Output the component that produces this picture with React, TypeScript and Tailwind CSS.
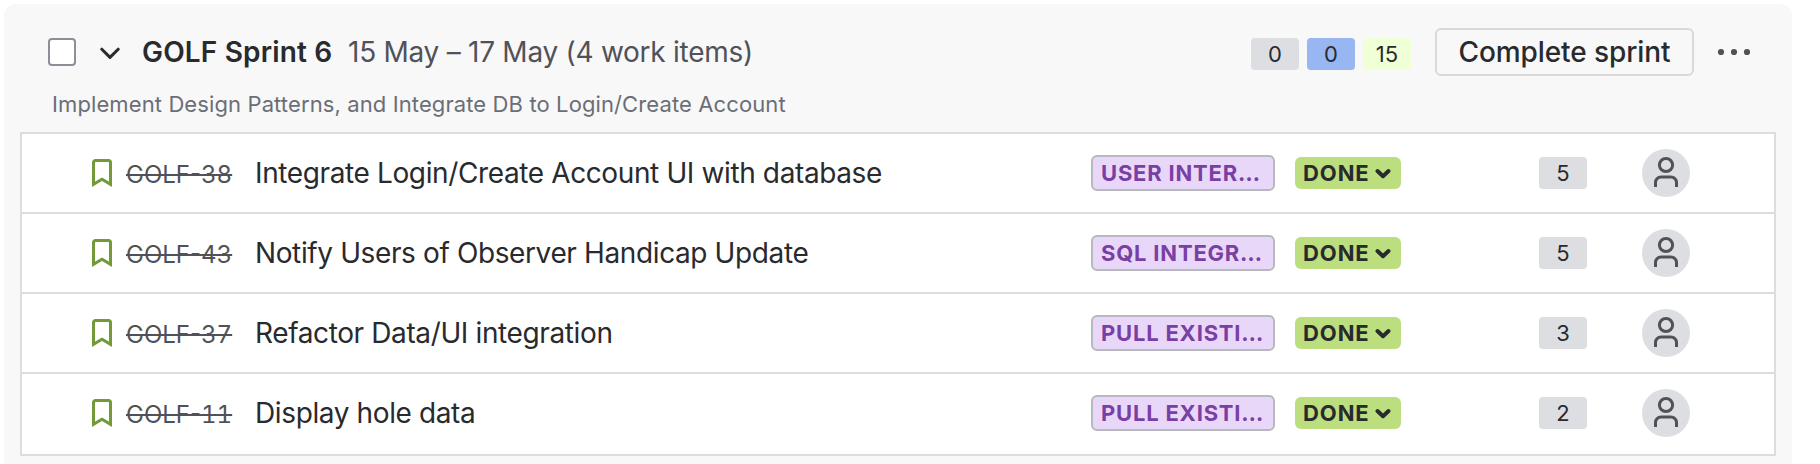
type WorkItem = { key: string; num: number; title: string; epic: string; points: number };

const items: WorkItem[] = [
  { key: "GOLF", num: 38, title: "Integrate Login/Create Account UI with database", epic: "USER INTER…", points: 5 },
  { key: "GOLF", num: 43, title: "Notify Users of Observer Handicap Update", epic: "SQL INTEGR…", points: 5 },
  { key: "GOLF", num: 37, title: "Refactor Data/UI integration", epic: "PULL EXISTI…", points: 3 },
  { key: "GOLF", num: 11, title: "Display hole data", epic: "PULL EXISTI…", points: 2 },
];

function StoryIcon() {
  return (
    <svg width="20" height="28" viewBox="0 0 20 28" fill="none" className="shrink-0">
      <path d="M1.5 25.3V3.5a2 2 0 0 1 2-2h13a2 2 0 0 1 2 2v21.8L10 20.2z" stroke="#73993a" strokeWidth="3" />
    </svg>
  );
}

function Avatar() {
  return (
    <span className="ml-[55px] size-12 shrink-0 rounded-full bg-[#dddee1]">
      <svg width="48" height="48" viewBox="0 0 48 48" fill="none" stroke="#505258" strokeWidth="3">
        <circle cx="24" cy="16" r="6.6" />
        <path d="M13.500 38v-4.500a5.500 5.500 0 0 1 5.500-5.500h10a5.500 5.500 0 0 1 5.500 5.500V38" />
      </svg>
    </span>
  );
}

function Row({ item }: { item: WorkItem }) {
  return (
    <li className="flex h-20 items-center border-b-2 border-[#dddddf] pl-[70px] last:border-transparent">
      <StoryIcon />
      <span className="mt-[3px] ml-[14px] w-[129px] shrink-0 text-2xl leading-7 text-[#505258]">
        <s className="decoration-2">
          {item.key}-<span className="tabular-nums">{item.num}</span>
        </s>
      </span>
      <span className="min-w-0 flex-1 truncate text-[28px] leading-9 tracking-[-0.38px] text-[#292a2e]">{item.title}</span>
      <span className="flex h-9 w-[184px] shrink-0 items-center rounded-md border-2 border-[#b7b9be] bg-[#e9d7f9] pl-2 text-[22px] leading-none font-bold tracking-[0.8px] whitespace-nowrap text-[#7a3fa3]">
        {item.epic}
      </span>
      <button className="ml-5 flex h-8 w-[106px] shrink-0 items-center rounded-md bg-[#bbde7e] pl-2 text-[22px] leading-none font-bold tracking-[0.9px] text-[#292a2e]">
        DONE
        <svg width="16" height="12" viewBox="0 0 16 12" fill="none" className="mt-px ml-[5px]">
          <path d="M2.500 3l5.500 5.200L13.500 3" stroke="#292a2e" strokeWidth="4" strokeLinecap="round" strokeLinejoin="round" />
        </svg>
      </button>
      <span className="ml-[138px] flex h-8 w-12 shrink-0 items-center justify-center rounded bg-[#dddee1] text-[22px] leading-none text-[#292a2e]">
        {item.points}
      </span>
      <Avatar />
      <span className="w-[84px] shrink-0" />
    </li>
  );
}

export default function App() {
  return (
    <div className="h-[464px] overflow-hidden bg-white pt-1 pl-1 font-['Inter',sans-serif]">
      <section className="h-[460px] w-[1788px] rounded-t-xl bg-[#f8f8f8] px-4">
        <header className="flex h-24 items-center pl-7">
          <span className="size-7 shrink-0 rounded border-2 border-[#8c8f97] bg-white" />
          <svg width="20" height="14" viewBox="0 0 20 14" fill="none" className="mt-1 ml-6">
            <path d="M1.800 2.200L10 10.400l8.200-8.200" stroke="#292a2e" strokeWidth="3" strokeLinecap="round" strokeLinejoin="round" />
          </svg>
          <h2 className="ml-[22px] w-[206px] text-[28px] leading-9 font-semibold tracking-[0.16px] text-[#292a2e]">GOLF Sprint 6</h2>
          <span className="text-[28px] leading-9 tracking-[-0.26px] text-[#505258]">15 May – 17 May (4 work items)</span>
          <div className="mt-1 ml-auto flex gap-2 text-[22px] leading-none text-[#292a2e]">
            <span className="flex h-8 w-12 items-center justify-center rounded bg-[#dddee1]">0</span>
            <span className="flex h-8 w-12 items-center justify-center rounded bg-[#97b6f2]">0</span>
            <span className="flex h-8 w-12 items-center justify-center rounded bg-[#efffd6]">15</span>
          </div>
          <button className="ml-6 h-12 w-[259px] rounded-md border-2 border-[#d9d9db] text-[28px] leading-9 font-medium tracking-[-0.1px] text-[#292a2e]">
            Complete sprint
          </button>
          <svg width="34" height="8" viewBox="0 0 34 8" fill="#505258" className="mr-[25px] ml-[23px]">
            <circle cx="4" cy="4" r="3.100" />
            <circle cx="17" cy="4" r="3.100" />
            <circle cx="30" cy="4" r="3.100" />
          </svg>
        </header>
        <p className="-mt-3 h-11 pt-px pl-8 text-[22px] leading-[30px] tracking-[0.11px] text-[#6b6e76]">
          Implement Design Patterns, and Integrate DB to Login/Create Account
        </p>
        <ul className="h-[324px] w-[1756px] border-2 border-[#dddddf] bg-white">
          {items.map((item) => (
            <Row key={item.num} item={item} />
          ))}
        </ul>
      </section>
    </div>
  );
}
